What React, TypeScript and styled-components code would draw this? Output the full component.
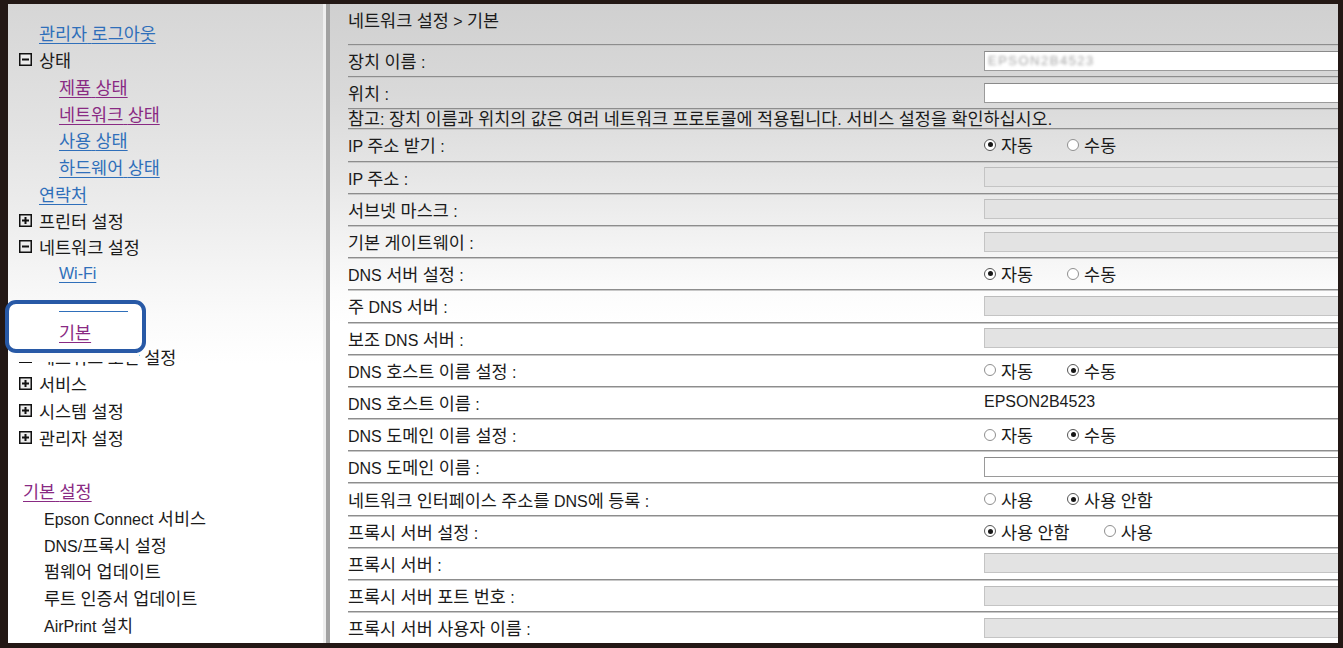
import * as React from "react";
import styled, { createGlobalStyle } from "styled-components";

const colors = {
	frame: "#231815",
	link: "#2f6fba",
	visited: "#892a83",
	text: "#1b1b1b",
	rule: "#8d8d8d",
	callout: "#2859a6",
};

const GlobalStyle = createGlobalStyle`
	html, body {
		margin: 0;
		padding: 0;
		background: ${colors.frame};
	}
	body {
		font-family: "Liberation Sans", "Noto Sans CJK KR", sans-serif;
	}
`;

// hangul in the screenshot runs a little larger than the latin text
const Hangul = styled.span`
	font-family: "Noto Sans CJK KR", sans-serif;
	font-size: 1.09em;
`;

const ko = (text: string) =>
	text.split(/([\u1100-\u11ff\u3130-\u318f\uac00-\ud7af]+)/).map((part, i) =>
		i % 2 ? <Hangul key={i}>{part}</Hangul> : part
	);

const Frame = styled.div`
	position: relative;
	display: flex;
	height: 648px;
	box-sizing: border-box;
	padding: 4px 5px 5px 8px;
	background: ${colors.frame};
	overflow: hidden;
	font-size: 16px;
	color: ${colors.text};
`;

const Sidebar = styled.nav`
	flex: none;
	width: 315px;
	padding-top: 15.5px;
	border-right: 3px solid #eeeeee;
	background: linear-gradient(to bottom, #d6d6d6 0, #e2e2e2 120px, #eeeeee 220px, #fafafa 310px, #ffffff 360px);
`;

const Item = styled.div<{ $indent: number; $gap?: number }>`
	display: flex;
	align-items: center;
	gap: 7px;
	height: 26.75px;
	padding-left: ${(p) => p.$indent}px;
	margin-top: ${(p) => p.$gap || 0}px;
	white-space: nowrap;
`;

const Link = styled.a<{ $visited?: boolean }>`
	color: ${(p) => (p.$visited ? colors.visited : colors.link)};
	text-decoration: underline;
	text-underline-offset: 3px;
	cursor: pointer;
`;

const Spacer = styled.div`
	height: 26.75px;
`;

const Main = styled.main`
	flex: 1;
	min-width: 0;
	padding-left: 18px;
	border-left: 4px solid #a2a2a2;
	overflow: hidden;
	background: linear-gradient(to bottom, #d0d0d0 0, #d9d9d9 90px, #e6e6e6 170px, #f3f3f3 240px, #fcfcfc 290px, #ffffff 320px);
`;

const Header = styled.div`
	height: 40px;
	box-sizing: border-box;
	padding-top: 4px;
	line-height: 24px;
`;

const Row = styled.div<{ $note?: boolean }>`
	display: grid;
	grid-template-columns: 636px minmax(0, 1fr);
	align-items: center;
	height: ${(p) => (p.$note ? 20 : 32.2)}px;
	box-sizing: border-box;
	border-top: 1px solid ${colors.rule};
	box-shadow: inset 0 1px 0 #c8c8c8;
	white-space: nowrap;
`;

const Note = styled.div`
	line-height: 18px;
`;

const TextBox = styled.div<{ $disabled?: boolean }>`
	width: calc(100% + 6px);
	height: 20px;
	box-sizing: border-box;
	border: 1px solid ${(p) => (p.$disabled ? "#c4c4c4" : "#9a9a9a")};
	border-top-color: ${(p) => (p.$disabled ? "#bcbcbc" : "#8a8a8a")};
	background: ${(p) => (p.$disabled ? "#e3e3e3" : "#ffffff")};
	display: flex;
	align-items: center;
	padding-left: 3px;
	overflow: hidden;
`;

const Blurred = styled.span`
	font-size: 13px;
	letter-spacing: 1.5px;
	color: #a4a4a4;
	filter: blur(1.4px);
`;

const RadioGroup = styled.div`
	display: flex;
	align-items: center;
	gap: 34px;
`;

const RadioOption = styled.label`
	display: flex;
	align-items: center;
	gap: 5px;
`;

const RadioCircle = styled.span<{ $checked?: boolean }>`
	position: relative;
	width: 12px;
	height: 12px;
	box-sizing: border-box;
	border-radius: 50%;
	border: 1px solid ${(p) => (p.$checked ? "#555" : "#8f8f8f")};
	background: #fff;
	&::after {
		content: "";
		display: ${(p) => (p.$checked ? "block" : "none")};
		position: absolute;
		left: 2.5px;
		top: 2.5px;
		width: 5px;
		height: 5px;
		border-radius: 50%;
		background: #161616;
	}
`;

const Callout = styled.div`
	position: absolute;
	left: 5px;
	top: 300px;
	width: 141px;
	height: 53px;
	box-sizing: border-box;
	padding-left: 50px;
	border: 4px solid ${colors.callout};
	border-radius: 11px;
	background: #fff;
	&::after {
		content: "";
		position: absolute;
		left: 8px;
		top: 100%;
		width: 122px;
		height: 9px;
		margin-top: 4px;
		background: #fdfdfd;
	}
`;

const Residue = styled.div`
	width: 69px;
	margin-top: 7px;
	border-top: 1px solid ${colors.link};
`;

const CalloutLink = styled(Link)`
	display: inline-block;
	margin-top: 10px;
	line-height: 20px;
`;

const Toggle = ({ open }: { open?: boolean }) => (
	<svg width="13" height="13" viewBox="0 0 13 13">
		<rect x="0.75" y="0.75" width="11.5" height="11.5" fill="#ececec" stroke="#111" strokeWidth="1.5" />
		<line x1="3" y1="6.5" x2="10" y2="6.5" stroke="#111" strokeWidth="2" />
		{!open && <line x1="6.5" y1="3" x2="6.5" y2="10" stroke="#111" strokeWidth="2" />}
	</svg>
);

type Radio = [string, boolean];
type Field =
	| { label: string; kind: "blurred" | "text" | "disabled" }
	| { label: string; kind: "value"; value: string }
	| { label: string; kind: "radio"; options: Radio[] };

const auto: Radio[] = [["자동", true], ["수동", false]];
const manual: Radio[] = [["자동", false], ["수동", true]];

const topFields: Field[] = [
	{ label: "장치 이름 :", kind: "blurred" },
	{ label: "위치 :", kind: "text" },
];

const fields: Field[] = [
	{ label: "IP 주소 받기 :", kind: "radio", options: auto },
	{ label: "IP 주소 :", kind: "disabled" },
	{ label: "서브넷 마스크 :", kind: "disabled" },
	{ label: "기본 게이트웨이 :", kind: "disabled" },
	{ label: "DNS 서버 설정 :", kind: "radio", options: auto },
	{ label: "주 DNS 서버 :", kind: "disabled" },
	{ label: "보조 DNS 서버 :", kind: "disabled" },
	{ label: "DNS 호스트 이름 설정 :", kind: "radio", options: manual },
	{ label: "DNS 호스트 이름 :", kind: "value", value: "EPSON2B4523" },
	{ label: "DNS 도메인 이름 설정 :", kind: "radio", options: manual },
	{ label: "DNS 도메인 이름 :", kind: "text" },
	{ label: "네트워크 인터페이스 주소를 DNS에 등록 :", kind: "radio", options: [["사용", false], ["사용 안함", true]] },
	{ label: "프록시 서버 설정 :", kind: "radio", options: [["사용 안함", true], ["사용", false]] },
	{ label: "프록시 서버 :", kind: "disabled" },
	{ label: "프록시 서버 포트 번호 :", kind: "disabled" },
	{ label: "프록시 서버 사용자 이름 :", kind: "disabled" },
];

const FieldValue = ({ field }: { field: Field }) => {
	switch (field.kind) {
		case "blurred":
			return (
				<TextBox>
					<Blurred>EPSON2B4523</Blurred>
				</TextBox>
			);
		case "text":
			return <TextBox />;
		case "disabled":
			return <TextBox $disabled />;
		case "value":
			return <div>{field.value}</div>;
		case "radio":
			return (
				<RadioGroup>
					{field.options.map(([text, checked]) => (
						<RadioOption key={text}>
							<RadioCircle $checked={checked} />
							<span>{ko(text)}</span>
						</RadioOption>
					))}
				</RadioGroup>
			);
	}
};

const FieldRow = ({ field }: { field: Field }) => (
	<Row>
		<div>{ko(field.label)}</div>
		<FieldValue field={field} />
	</Row>
);

const Entry = ({ indent, text, link, visited, toggle, gap }: {
	indent: number;
	text: string;
	link?: boolean;
	visited?: boolean;
	toggle?: "open" | "closed";
	gap?: number;
}) => (
	<Item $indent={indent} $gap={gap}>
		{toggle && <Toggle open={toggle === "open"} />}
		{link ? <Link $visited={visited}>{ko(text)}</Link> : <span>{ko(text)}</span>}
	</Item>
);

export default function App() {
	return (
		<Frame>
			<GlobalStyle />
			<Sidebar>
				<Entry indent={31} text="관리자 로그아웃" link />
				<Entry indent={11} text="상태" toggle="open" />
				<Entry indent={51} text="제품 상태" link visited />
				<Entry indent={51} text="네트워크 상태" link visited />
				<Entry indent={51} text="사용 상태" link />
				<Entry indent={51} text="하드웨어 상태" link />
				<Entry indent={31} text="연락처" link />
				<Entry indent={11} text="프린터 설정" toggle="closed" />
				<Entry indent={11} text="네트워크 설정" toggle="open" />
				<Entry indent={51} text="Wi-Fi" link />
				{/* these two entries sit under the callout */}
				<Spacer />
				<Spacer />
				<Entry indent={11} text="네트워크 보안 설정" toggle="open" gap={3} />
				<Entry indent={11} text="서비스" toggle="closed" />
				<Entry indent={11} text="시스템 설정" toggle="closed" />
				<Entry indent={11} text="관리자 설정" toggle="closed" />
				<Spacer />
				<Entry indent={15} text="기본 설정" link visited />
				<Entry indent={36} text="Epson Connect 서비스" />
				<Entry indent={36} text="DNS/프록시 설정" />
				<Entry indent={36} text="펌웨어 업데이트" />
				<Entry indent={36} text="루트 인증서 업데이트" />
				<Entry indent={36} text="AirPrint 설치" />
			</Sidebar>
			<Main>
				<Header>{ko("네트워크 설정 > 기본")}</Header>
				{topFields.map((f) => (
					<FieldRow key={f.label} field={f} />
				))}
				<Row $note>
					<Note>{ko("참고: 장치 이름과 위치의 값은 여러 네트워크 프로토콜에 적용됩니다. 서비스 설정을 확인하십시오.")}</Note>
				</Row>
				{fields.map((f) => (
					<FieldRow key={f.label} field={f} />
				))}
			</Main>
			<Callout>
				<Residue />
				<CalloutLink $visited>{ko("기본")}</CalloutLink>
			</Callout>
		</Frame>
	);
}
